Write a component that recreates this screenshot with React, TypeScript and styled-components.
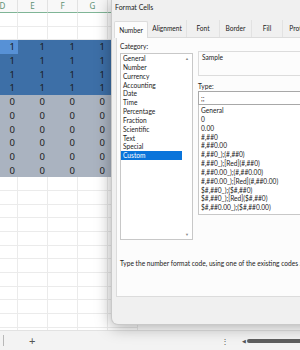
import React from 'react';
import styled, { createGlobalStyle } from 'styled-components';

const GlobalStyle = createGlobalStyle`
  html, body {
    margin: 0;
    padding: 0;
    background: #ffffff;
  }
  body {
    font-family: Lato, 'Noto Sans', sans-serif;
  }
`;

type Fill = 'none' | 'blue' | 'active' | 'gray';

// the last column sits under the dialog, so it has no visible letter
const columns = ['D', 'E', 'F', 'G', ''];

const sheetRows: { fill: Fill; value: string }[] = [
  { fill: 'none', value: '' },
  { fill: 'none', value: '' },
  { fill: 'blue', value: '1' },
  { fill: 'blue', value: '1' },
  { fill: 'blue', value: '1' },
  { fill: 'blue', value: '1' },
  { fill: 'gray', value: '0' },
  { fill: 'gray', value: '0' },
  { fill: 'gray', value: '0' },
  { fill: 'gray', value: '0' },
  { fill: 'gray', value: '0' },
  { fill: 'gray', value: '0' },
  ...Array.from({ length: 12 }, () => ({ fill: 'none' as Fill, value: '' })),
];

const categories = [
  'General',
  'Number',
  'Currency',
  'Accounting',
  'Date',
  'Time',
  'Percentage',
  'Fraction',
  'Scientific',
  'Text',
  'Special',
  'Custom',
];

const formats = [
  'General',
  '0',
  '0.00',
  '#,##0',
  '#,##0.00',
  '#,##0_);(#,##0)',
  '#,##0_);[Red](#,##0)',
  '#,##0.00_);(#,##0.00)',
  '#,##0.00_);[Red](#,##0.00)',
  '$#,##0_);($#,##0)',
  '$#,##0_);[Red]($#,##0)',
  '$#,##0.00_);($#,##0.00)',
];

const tabs = [
  { label: 'Number', width: 34 },
  { label: 'Alignment', width: 39 },
  { label: 'Font', width: 33 },
  { label: 'Border', width: 32 },
  { label: 'Fill', width: 31 },
  { label: 'Protection', width: 44 },
];

function App() {
  return (
    <Screen>
      <GlobalStyle />
      <Sheet>
        <Grid>
          {columns.map(function (c, i) {
            return <ColumnHeader key={i}>{c}</ColumnHeader>;
          })}
          {sheetRows.map(function (row, r) {
            return columns.map(function (c, i) {
              const fill: Fill = row.fill === 'blue' && r === 2 && i === 0 ? 'active' : row.fill;
              return (
                <Cell key={r + '-' + i} $fill={fill}>
                  {i < 4 ? row.value : ''}
                </Cell>
              );
            });
          })}
        </Grid>
      </Sheet>
      <StatusBar>
        <TabDivider />
        <AddSheet>+</AddSheet>
        <Spacer />
        <MoreDots>⋮</MoreDots>
        <ScrollArrow>◀</ScrollArrow>
        <ScrollThumb />
      </StatusBar>

      <Dialog>
        <TitleBar>Format Cells</TitleBar>
        <TabStrip>
          {tabs.map(function (t, i) {
            return (
              <Tab key={t.label} $width={t.width} $selected={i === 0}>
                {t.label}
              </Tab>
            );
          })}
        </TabStrip>
        <Panel>
          <Columns>
            <Column>
              <FieldLabel>Category:</FieldLabel>
              <CategoryList>
                <Items>
                  {categories.map(function (c) {
                    return (
                      <Item key={c} $selected={c === 'Custom'}>
                        {c}
                      </Item>
                    );
                  })}
                </Items>
                <ListScroll>
                  <Arrow>▲</Arrow>
                  <Arrow>▼</Arrow>
                </ListScroll>
              </CategoryList>
            </Column>
            <Column>
              <SampleBox>Sample</SampleBox>
              <TypeLabel>Type:</TypeLabel>
              <TypeInput>;;</TypeInput>
              <FormatList>
                {formats.map(function (f) {
                  return <Item key={f}>{f}</Item>;
                })}
              </FormatList>
            </Column>
          </Columns>
          <Hint>Type the number format code, using one of the existing codes as a starting point.</Hint>
        </Panel>
        <Footer />
      </Dialog>
    </Screen>
  );
}

export default App;

const Screen = styled.div({
  position: 'relative',
  width: 300,
  height: 350,
  overflow: 'hidden',
  display: 'flex',
  flexDirection: 'column',
  background: '#ffffff',
});

const Sheet = styled.div({
  height: 330,
  overflow: 'hidden',
});

const Grid = styled.div({
  display: 'grid',
  gridTemplateColumns: 'repeat(5, 30px)',
  gridTemplateRows: '13px',
  gridAutoRows: '13.7px',
  marginLeft: -12,
  fontFamily: "'Noto Sans', sans-serif",
});

const ColumnHeader = styled.div({
  boxSizing: 'border-box',
  background: '#f8f8f8',
  borderRight: '1px solid #e2e2e2',
  borderBottom: '1px solid #7fb596',
  color: '#5d9273',
  fontSize: 8,
  lineHeight: '12px',
  textAlign: 'center',
});

const fills: Record<Fill, string> = {
  none: '#ffffff',
  blue: '#3d6fa7',
  active: '#5791d6',
  gray: '#aab3c0',
};

const Cell = styled.div<{ $fill: Fill }>((p) => ({
  boxSizing: 'border-box',
  background: fills[p.$fill],
  borderRight: p.$fill === 'none' ? '1px solid #ebebeb' : 'none',
  borderBottom: p.$fill === 'none' ? '1px solid #ebebeb' : 'none',
  color: '#1c1c1c',
  fontSize: 9.5,
  lineHeight: '13.7px',
  textAlign: 'right',
  paddingRight: 3,
}));

const StatusBar = styled.div({
  height: 20,
  display: 'flex',
  alignItems: 'center',
  background: '#f3f3f3',
  borderTop: '1px solid #e2e2e2',
  boxSizing: 'border-box',
  color: '#444',
});

const TabDivider = styled.div({
  width: 1,
  height: 11,
  marginLeft: 3,
  background: '#b8b8b8',
});

const AddSheet = styled.div({
  marginLeft: 25,
  fontSize: 11,
  lineHeight: '11px',
  color: '#555',
});

const Spacer = styled.div({
  flex: 1,
});

const MoreDots = styled.div({
  fontSize: 8,
  color: '#555',
  marginRight: 13,
});

const ScrollArrow = styled.div({
  fontSize: 5,
  color: '#555',
  marginRight: 1,
});

const ScrollThumb = styled.div({
  width: 60,
  height: 4,
  borderRadius: 2,
  background: '#5f5f5f',
  marginRight: -7,
});

const Dialog = styled.div({
  position: 'absolute',
  left: 111,
  top: 0,
  width: 220,
  height: 325,
  boxSizing: 'border-box',
  display: 'flex',
  flexDirection: 'column',
  background: '#f0f0f0',
  border: '1px solid #c9c9c9',
  borderTop: 'none',
  borderRadius: '0 0 7px 7px',
  boxShadow: '0 2px 16px rgba(0, 0, 0, 0.35)',
  color: '#1b1b1b',
  fontSize: 6.6,
});

const TitleBar = styled.div({
  height: 17,
  lineHeight: '14px',
  paddingLeft: 3,
  fontSize: 7,
});

const TabStrip = styled.div({
  height: 20,
  display: 'flex',
  alignItems: 'flex-end',
  paddingLeft: 2,
});

const Tab = styled.div<{ $width: number; $selected?: boolean }>((p) => ({
  flex: 'none',
  width: p.$width,
  height: 17,
  boxSizing: 'border-box',
  lineHeight: '16px',
  textAlign: 'center',
  background: p.$selected ? '#fcfcfc' : 'transparent',
  border: p.$selected ? '1px solid #dcdcdc' : 'none',
  borderBottom: 'none',
  borderRight: p.$selected ? '1px solid #dcdcdc' : '1px solid #e2e2e2',
  borderRadius: p.$selected ? '2px 2px 0 0' : 0,
  marginBottom: p.$selected ? -1 : 0,
  position: p.$selected ? 'relative' : 'static',
}));

const Panel = styled.div({
  flex: 1,
  marginLeft: 4,
  background: '#fcfcfc',
  border: '1px solid #dcdcdc',
  borderRight: 'none',
  padding: '2px 0 0 3px',
  display: 'flex',
  flexDirection: 'column',
});

const Columns = styled.div({
  display: 'grid',
  gridTemplateColumns: '73px 1fr',
  columnGap: 5,
});

const Column = styled.div({
  display: 'flex',
  flexDirection: 'column',
});

const FieldLabel = styled.div({
  height: 13,
  lineHeight: '12px',
});

const CategoryList = styled.div({
  height: 187,
  boxSizing: 'border-box',
  border: '1px solid #c8c8c8',
  background: '#ffffff',
  display: 'flex',
});

const Items = styled.div({
  flex: 1,
  display: 'flex',
  flexDirection: 'column',
});

const Item = styled.div<{ $selected?: boolean }>((p) => ({
  height: 8.85,
  lineHeight: '8.85px',
  paddingLeft: 2,
  whiteSpace: 'nowrap',
  background: p.$selected ? '#0a74da' : 'transparent',
  color: p.$selected ? '#ffffff' : '#1b1b1b',
}));

const ListScroll = styled.div({
  width: 10,
  display: 'flex',
  flexDirection: 'column',
  justifyContent: 'space-between',
  alignItems: 'center',
  padding: '2px 0',
});

const Arrow = styled.div({
  fontSize: 4,
  color: '#8a8a8a',
});

const SampleBox = styled.div({
  marginTop: 11,
  height: 25,
  boxSizing: 'border-box',
  border: '1px solid #dcdcdc',
  borderRight: 'none',
  padding: '1px 0 0 3px',
  lineHeight: '9px',
});

const TypeLabel = styled.div({
  height: 15,
  paddingTop: 6,
  boxSizing: 'border-box',
  lineHeight: '9px',
});

const TypeInput = styled.div({
  height: 14,
  boxSizing: 'border-box',
  border: '1px solid #a8a8a8',
  borderRight: 'none',
  background: '#ffffff',
  paddingLeft: 2,
  lineHeight: '12px',
});

const FormatList = styled.div({
  height: 110,
  boxSizing: 'border-box',
  border: '1px solid #c8c8c8',
  borderTop: 'none',
  borderRight: 'none',
  background: '#ffffff',
  paddingTop: 1,
});

const Hint = styled.div({
  marginTop: 18,
  lineHeight: '10px',
  whiteSpace: 'nowrap',
});

const Footer = styled.div({
  height: 27,
});
